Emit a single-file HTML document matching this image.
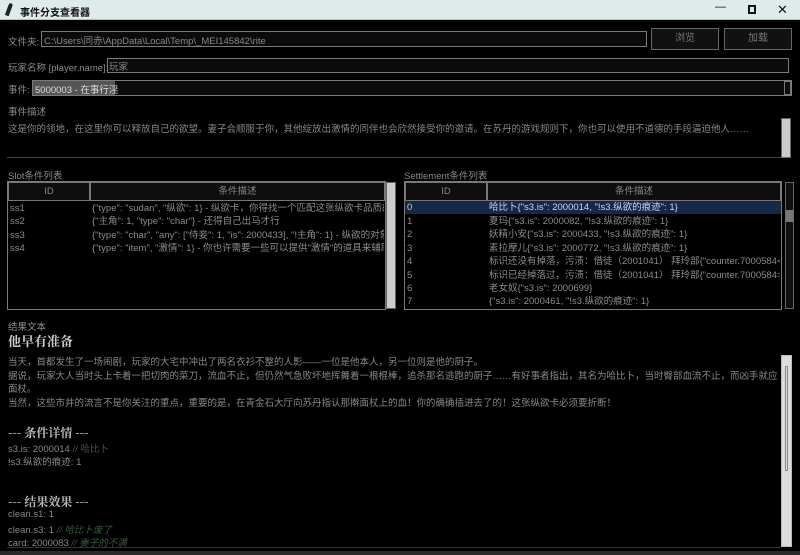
<!DOCTYPE html>
<html><head><meta charset="utf-8"><style>
*{margin:0;padding:0;box-sizing:border-box}
body{width:800px;height:555px;background:#000;position:relative;overflow:hidden;font-family:"Liberation Sans","Noto Sans CJK SC",sans-serif;font-size:9.5px;color:#8c8c8c}
.a{position:absolute;white-space:nowrap}
.box{position:absolute;border:1px solid #7a7a7a;background:#0b0b0b}
.btn{position:absolute;border:1px solid #666;background:#111;color:#777;text-align:center;font-size:10px}
.row{position:absolute;height:13px;line-height:13px;white-space:nowrap;overflow:hidden}
.hd{position:absolute;border:1px solid #777;background:#0e0e0e;text-align:center;color:#888;line-height:17px}
.sb{position:absolute;background:#1a1a1a;border:1px solid #666}
</style></head><body>
<div class="a" style="left:0;top:0;width:800px;height:20px;background:#dfeaea;border-bottom:1px solid #bbb"></div>
<div class="a" style="left:7px;top:3px;width:4px;height:13px;background:#222;transform:rotate(20deg);border-radius:2px 2px 0 0"></div>
<div class="a" style="left:20px;top:4px;font-size:10px;font-weight:bold;color:#111">事件分支查看器</div>
<div class="a" style="left:715px;top:1px;font-size:11px;color:#111">—</div>
<div class="a" style="left:748px;top:5px;width:8px;height:9px;border:2px solid #111"></div>
<div class="a" style="left:777px;top:2px;font-size:13px;color:#111">✕</div>

<div class="a" style="left:8px;top:34px">文件夹:</div>
<div class="box" style="left:41px;top:31px;width:606px;height:16px"></div>
<div class="a" style="left:44px;top:33px;color:#888">C:\Users\同赤\AppData\Local\Temp\_MEI145842\rite</div>
<div class="btn" style="left:651px;top:28px;width:68px;height:22px;line-height:20px">浏览</div>
<div class="btn" style="left:724px;top:28px;width:68px;height:22px;line-height:20px">加载</div>

<div class="a" style="left:8px;top:60px">玩家名称 [player.name]:</div>
<div class="box" style="left:107px;top:58px;width:682px;height:15px"></div>
<div class="a" style="left:109px;top:59px;color:#888">玩家</div>

<div class="a" style="left:8px;top:82px">事件:</div>
<div class="box" style="left:32px;top:80px;width:760px;height:16px"></div>
<div class="a" style="left:33px;top:81px;width:82px;height:14px;background:#555"></div>
<div class="a" style="left:35px;top:82px;color:#ddd">5000003 - 在事行淫</div>
<div class="a" style="left:784px;top:81px;width:7px;height:14px;border:1px solid #777"></div>

<div class="a" style="left:8px;top:104px">事件描述</div>
<div class="a" style="left:8px;top:121px;color:#888">这是你的领地，在这里你可以释放自己的欲望。妻子会顺服于你，其他绽放出激情的同伴也会欣然接受你的邀请。在苏丹的游戏规则下，你也可以使用不道德的手段逼迫他人……</div>
<div class="a" style="left:7px;top:157px;width:774px;height:1px;background:#444"></div>
<div class="sb" style="left:781px;top:118px;width:10px;height:40px;background:#ccc"></div>

<div class="a" style="left:8px;top:168px">Slot条件列表</div>
<div class="box" style="left:7px;top:181px;width:379px;height:129px;background:#000"></div>
<div class="hd" style="left:8px;top:182px;width:82px;height:19px">ID</div>
<div class="hd" style="left:90px;top:182px;width:295px;height:19px">条件描述</div>
<div class="row" style="left:10px;top:202px">ss1</div><div class="row" style="left:92px;top:202px;width:292px">{"type": "sudan", "纵欲": 1} - 纵欲卡，你得找一个匹配这张纵欲卡品质的女</div>
<div class="row" style="left:10px;top:215px">ss2</div><div class="row" style="left:92px;top:215px;width:292px">{"主角": 1, "type": "char"} - 还得自己出马才行</div>
<div class="row" style="left:10px;top:229px">ss3</div><div class="row" style="left:92px;top:229px;width:292px">{"type": "char", "any": ["侍妾": 1, "is": 2000433], "!主角": 1} - 纵欲的对象</div>
<div class="row" style="left:10px;top:242px">ss4</div><div class="row" style="left:92px;top:242px;width:292px">{"type": "item", "激情": 1} - 你也许需要一些可以提供"激情"的道具来辅助。</div>
<div class="sb" style="left:386px;top:182px;width:10px;height:127px;background:#ccc"></div>

<div class="a" style="left:404px;top:168px">Settlement条件列表</div>
<div class="box" style="left:404px;top:181px;width:378px;height:129px;background:#000"></div>
<div class="hd" style="left:405px;top:182px;width:82px;height:19px">ID</div>
<div class="hd" style="left:487px;top:182px;width:294px;height:19px">条件描述</div>
<div class="a" style="left:405px;top:201px;width:376px;height:13px;background:#152848"></div>
<div class="row" style="left:407px;top:201px;color:#bcd">0</div><div class="row" style="left:489px;top:201px;color:#c8d8f0">哈比卜{"s3.is": 2000014, "!s3.纵欲的痕迹": 1}</div>
<div class="row" style="left:407px;top:215px">1</div><div class="row" style="left:489px;top:215px">夏玛{"s3.is": 2000082, "!s3.纵欲的痕迹": 1}</div>
<div class="row" style="left:407px;top:228px">2</div><div class="row" style="left:489px;top:228px">妖精小安{"s3.is": 2000433, "!s3.纵欲的痕迹": 1}</div>
<div class="row" style="left:407px;top:242px">3</div><div class="row" style="left:489px;top:242px">素拉摩儿{"s3.is": 2000772, "!s3.纵欲的痕迹": 1}</div>
<div class="row" style="left:407px;top:255px">4</div><div class="row" style="left:489px;top:255px;width:291px">标识还没有掉落，污渍：借徒（2001041） 拜玲部{"counter.7000584<":</div>
<div class="row" style="left:407px;top:269px">5</div><div class="row" style="left:489px;top:269px;width:291px">标识已经掉落过，污渍：借徒（2001041） 拜玲部{"counter.7000584>="</div>
<div class="row" style="left:407px;top:282px">6</div><div class="row" style="left:489px;top:282px">老女奴{"s3.is": 2000699}</div>
<div class="row" style="left:407px;top:295px">7</div><div class="row" style="left:489px;top:295px">{"s3.is": 2000461, "!s3.纵欲的痕迹": 1}</div>
<div class="sb" style="left:785px;top:182px;width:9px;height:127px;background:#111"></div>
<div class="a" style="left:786px;top:210px;width:7px;height:12px;background:#777"></div>

<div class="a" style="left:8px;top:319px">结果文本</div>
<div class="a" style="left:8px;top:331px;font-size:13px;font-weight:bold;color:#ccc;font-family:'Noto Serif CJK SC',serif">他早有准备</div>
<div class="a" style="left:8px;top:356px;width:770px;overflow:hidden;color:#888;line-height:13.5px">当天，首都发生了一场闹剧，玩家的大宅中冲出了两名衣衫不整的人影——一位是他本人，另一位则是他的厨子。<br>据说，玩家大人当时头上卡着一把切肉的菜刀，流血不止，但仍然气急败坏地挥舞着一根棍棒，追杀那名逃跑的厨子……有好事者指出，其名为哈比卜，当时臀部血流不止，而凶手就应该是玩家手中的<br>面杖。<br>当然，这些市井的流言不是你关注的重点，重要的是，在青金石大厅向苏丹指认那擀面杖上的血！你的确确插进去了的！这张纵欲卡必须要折断！</div>
<div class="a" style="left:8px;top:424px;font-size:12px;font-weight:bold;color:#bbb;font-family:'Noto Serif CJK SC',serif">--- 条件详情 ---</div>
<div class="a" style="left:8px;top:441px;color:#888">s3.is: 2000014 <span style="color:#3a5a3a">// 哈比卜</span></div>
<div class="a" style="left:8px;top:454px;color:#888">!s3.纵欲的痕迹: 1</div>
<div class="a" style="left:8px;top:493px;font-size:12px;font-weight:bold;color:#bbb;font-family:'Noto Serif CJK SC',serif">--- 结果效果 ---</div>
<div class="a" style="left:8px;top:509px;color:#888">clean.s1: 1</div>
<div class="a" style="left:8px;top:522px;color:#888">clean.s3: 1 <span style="color:#3a5a3a;font-style:italic">// 哈比卜废了</span></div>
<div class="a" style="left:8px;top:535px;color:#888">card: 2000083 <span style="color:#3a5a3a;font-style:italic">// 妻子的不满</span></div>
<div class="a" style="left:7px;top:547px;width:774px;height:1px;background:#333"></div>
<div class="sb" style="left:781px;top:355px;width:11px;height:192px;background:#dcdcdc;border-color:#bbb"></div>
<div class="a" style="left:785px;top:366px;width:3px;height:105px;border:1px solid #888"></div>
<div class="a" style="left:0;top:551px;width:800px;height:4px;background:#2a2a2a"></div>
</body></html>
